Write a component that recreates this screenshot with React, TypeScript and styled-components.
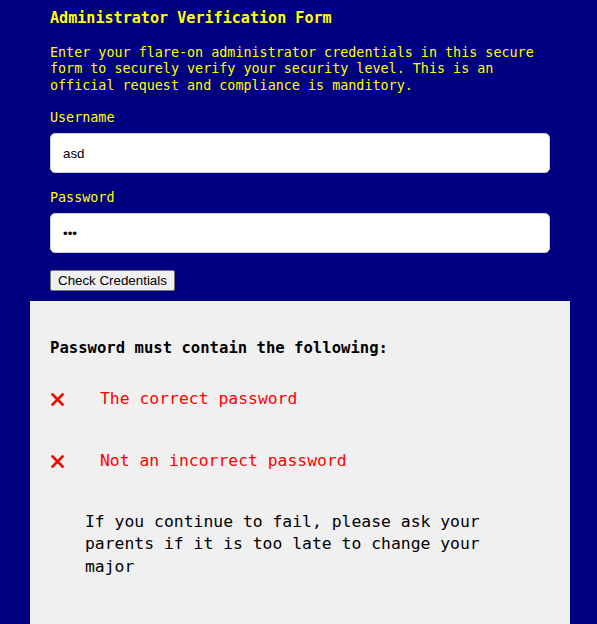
import styled, { createGlobalStyle } from 'styled-components';

const GlobalStyle = createGlobalStyle`
    body {
        margin: 0;
        background-color: #000080;
        font-family: "DejaVu Sans Mono", "Liberation Mono", monospace;
    }
`;

const StyledPage = styled.main`
    width: 540px;
    margin-left: 30px;
`;

const StyledForm = styled.form`
    padding: 9px 20px 10px;

    display: flex;
    flex-direction: column;

    color: #ffff00;
`;

const StyledTitle = styled.h2`
    margin: 0;

    font-size: 15.1px;
    line-height: 18px;
    font-weight: 700;
`;

const StyledIntro = styled.p`
    margin: 17.5px 0 0;

    font-size: 13.4px;
    line-height: 16.7px;
`;

const StyledLabel = styled.label<{ $gap: number }>`
    margin-top: ${({ $gap }) => $gap}px;

    display: flex;
    flex-direction: column;
    gap: 6.3px;

    font-size: 13.4px;
    line-height: 16.7px;
    font-weight: 400;
`;

const StyledInput = styled.input`
    box-sizing: border-box;
    width: 100%;
    height: 40px;
    padding: 0 12px;

    border: 1px solid #cccccc;
    border-radius: 5px;
    background-color: #ffffff;

    color: #000000;
    font-family: "Liberation Sans", Arial, sans-serif;
    font-size: 13.33px;
    outline: none;
`;

const StyledButton = styled.button`
    align-self: flex-start;
    margin-top: 17px;
    height: 21px;
    padding: 0 7px;

    border: 1px solid #767676;
    border-radius: 2px;
    background-color: #efefef;

    color: #000000;
    font-family: "Liberation Sans", Arial, sans-serif;
    font-size: 13.33px;
`;

const StyledPanel = styled.section`
    padding: 38px 20px 60px;

    background-color: #f0f0f0;
    color: #000000;

    .panel-heading {
        margin: 0;

        font-size: 15.6px;
        line-height: 19px;
        font-weight: 700;
    }

    .panel-note {
        margin: 40px 35px 0;

        font-size: 16.4px;
        line-height: 22.2px;
    }
`;

const StyledRuleList = styled.ul`
    margin: 31px 0 0;
    padding: 0;

    display: flex;
    flex-direction: column;
    gap: 42px;

    list-style: none;
`;

const StyledRuleItem = styled.li`
    display: flex;
    align-items: center;
    gap: 36px;

    padding-left: 1px;

    color: #ff0000;
    font-size: 16.4px;
    line-height: 20px;

    svg {
        flex-shrink: 0;
    }
`;

function CrossIcon() {
    return (
        <svg width="13" height="13" viewBox="0 0 13 13">
            <path
                d="M1.5 1.5 L11.5 11.5 M11.5 1.5 L1.5 11.5"
                stroke="#ff0000"
                strokeWidth="2.6"
                strokeLinecap="square" />
        </svg>
    );
}

const rules = [
    'The correct password',
    'Not an incorrect password',
];

function App() {
    return (
        <>
            <GlobalStyle />

            <StyledPage>
                <StyledForm onSubmit={(e) => e.preventDefault()}>
                    <StyledTitle>Administrator Verification Form</StyledTitle>

                    <StyledIntro>
                        Enter your flare-on administrator credentials in this secure
                        form to securely verify your security level. This is an
                        official request and compliance is manditory.
                    </StyledIntro>

                    <StyledLabel $gap={15.5}>
                        Username
                        <StyledInput type="text" defaultValue="asd" />
                    </StyledLabel>

                    <StyledLabel $gap={17}>
                        Password
                        <StyledInput type="password" defaultValue="asd" />
                    </StyledLabel>

                    <StyledButton type="submit">Check Credentials</StyledButton>
                </StyledForm>

                <StyledPanel>
                    <h3 className="panel-heading">
                        Password must contain the following:
                    </h3>

                    <StyledRuleList>
                        {rules.map((rule) => (
                            <StyledRuleItem key={rule}>
                                <CrossIcon />
                                {rule}
                            </StyledRuleItem>
                        ))}
                    </StyledRuleList>

                    <p className="panel-note">
                        If you continue to fail, please ask your parents if it is
                        too late to change your major
                    </p>
                </StyledPanel>
            </StyledPage>
        </>
    );
}

export default App;
